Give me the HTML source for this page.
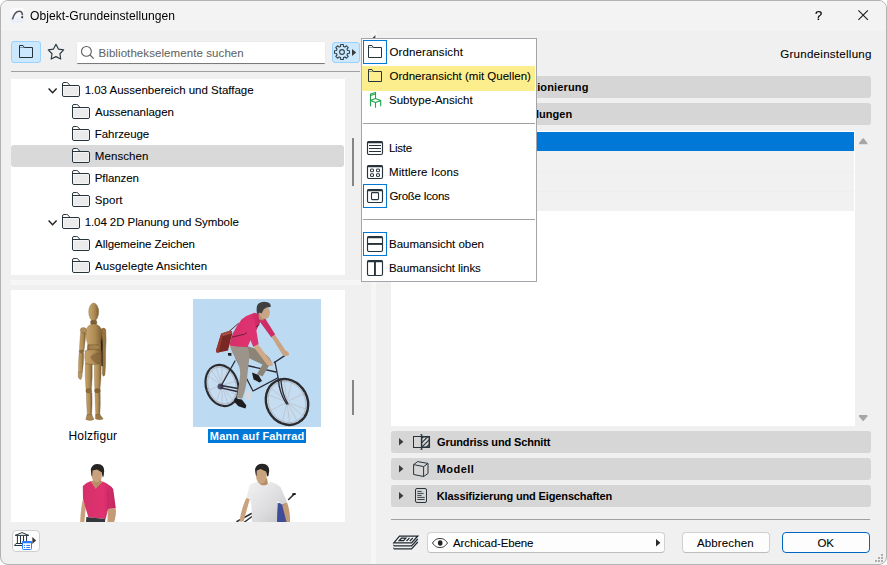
<!DOCTYPE html>
<html lang="de">
<head>
<meta charset="utf-8">
<title>Objekt-Grundeinstellungen</title>
<style>
*{box-sizing:border-box;margin:0;padding:0}
html,body{width:887px;height:565px;overflow:hidden;background:#fff}
body{font-family:"Liberation Sans",sans-serif;font-size:12px;color:#000;position:relative}
#win *{position:absolute}
#win{position:absolute;left:0;top:0;width:887px;height:565px;background:#f0f0f0;border:1px solid #b2b2b2;border-radius:8px;overflow:hidden}
#win>*{margin:-1px 0 0 -1px}
.t{white-space:nowrap;line-height:16px;height:16px;font-size:11.5px;-webkit-text-stroke:0.07px currentColor}
#titlebar{left:1px;top:1px;width:885px;height:30px;background:#f3f3f3}
.hdr{left:391px;width:480px;height:22px;background:#d6d6d6;border-radius:3px}
svg{overflow:visible}
</style>
</head>
<body>
<div id="win">
<div id="titlebar"></div>
<svg style="left:10px;top:7.5px" width="14" height="14.5" viewBox="0 0 14 14.5"><defs><linearGradient id="tig" x1="0" x2="0" y1="0" y2="1"><stop offset="0" stop-color="#fdfdfe"/><stop offset="1" stop-color="#e9edf7"/></linearGradient></defs><rect x="0" y="0" width="14" height="14.5" rx="2.5" fill="url(#tig)"/><path d="M2.4 11.4 C3.8 6.4 6.4 3.3 9.2 3.3 C11.4 3.3 12.4 5 12.4 7.3" fill="none" stroke="#55555f" stroke-width="1.6"/><rect x="11.3" y="8.3" width="1.8" height="1.9" fill="#2a2a30"/></svg>
<div class="t" id="title" style="left:30.27px;top:7.91px;font-size:12.1px;letter-spacing:0.050px;-webkit-text-stroke:0px currentColor;will-change:transform;">Objekt-Grundeinstellungen</div>
<div class="t" id="help" style="left:815.20px;top:7.50px;font-size:13px;-webkit-text-stroke:0.2px currentColor;will-change:transform;">?</div>
<svg style="left:858px;top:10px" width="10.3" height="10.3" viewBox="0 0 10.3 10.3"><path d="M0.4 0.4 L9.9 9.9 M9.9 0.4 L0.4 9.9" stroke="#1a1a1a" stroke-width="1.05" fill="none"/></svg>
<div style="left:11px;top:41px;width:30px;height:22px;background:#cce8ff;border:1px solid #99d1ff;border-radius:3px"></div>
<svg style="left:19px;top:45px" width="14" height="13" viewBox="0 0 14 13"><path d="M0.5 12.5 V0.5 H4 L5.3 2.5 H13.5 V12.5 Z" fill="none" stroke="#26323a" stroke-width="1"/><path d="M0.5 2.5 H5" stroke="#26323a" stroke-width="0.8" fill="none" opacity="0.55"/></svg>
<svg style="left:40px;top:40px" width="30" height="25" viewBox="0 0 30 25"><path d="M15.95 4.35 L18.39 9.09 L23.65 9.95 L19.90 13.73 L20.71 19.00 L15.95 16.60 L11.19 19.00 L12.00 13.73 L8.25 9.95 L13.51 9.09 Z" fill="none" stroke="#2f3c44" stroke-width="1.2" stroke-linejoin="round"/></svg>
<div style="left:77px;top:42px;width:248px;height:22px;background:#fff;border-bottom:1px solid #7a7a7a;border-radius:1px;box-shadow:0 0 0 0.5px #e6e6e6"></div>
<svg style="left:80px;top:45px" width="15" height="15" viewBox="0 0 15 15"><circle cx="6.4" cy="6.4" r="4.9" fill="none" stroke="#5c5c5c" stroke-width="1.1"/><path d="M10 10 L13.7 13.6" stroke="#5c5c5c" stroke-width="1.2"/></svg>
<div class="t" id="search" style="left:98.50px;top:45.02px;font-size:11.5px;letter-spacing:0.081px;color:#646464;">Bibliothekselemente suchen</div>
<div style="left:332px;top:42px;width:28px;height:21px;background:#cce8ff;border:1px solid #99d1ff;border-radius:3px"></div>
<svg style="left:334px;top:44px" width="16" height="16" viewBox="0 0 16 16"><path d="M6.54 2.49 L6.69 0.51 L9.31 0.51 L9.46 2.49 L10.86 3.07 L12.37 1.78 L14.22 3.63 L12.93 5.14 L13.51 6.54 L15.49 6.69 L15.49 9.31 L13.51 9.46 L12.93 10.86 L14.22 12.37 L12.37 14.22 L10.86 12.93 L9.46 13.51 L9.31 15.49 L6.69 15.49 L6.54 13.51 L5.14 12.93 L3.63 14.22 L1.78 12.37 L3.07 10.86 L2.49 9.46 L0.51 9.31 L0.51 6.69 L2.49 6.54 L3.07 5.14 L1.78 3.63 L3.63 1.78 L5.14 3.07 Z" fill="none" stroke="#33414a" stroke-width="1.1" stroke-linejoin="round"/><circle cx="8" cy="8" r="2.4" fill="none" stroke="#33414a" stroke-width="1.1"/></svg>
<svg style="left:352px;top:49px" width="4.2" height="7" viewBox="0 0 4.2 7"><path d="M0 0 L4.2 3.5 L0 7 Z" fill="#3a3a3a"/></svg>
<div style="left:11px;top:71px;width:349px;height:1px;background:#a0a0a0"></div>
<div style="left:11px;top:79px;width:334px;height:196px;background:#fff"></div>
<div style="left:11px;top:145px;width:333px;height:22px;background:#d9d9d9;border-radius:3px"></div>
<svg style="left:48px;top:88px" width="10" height="6" viewBox="0 0 10 6"><path d="M0.6 0.6 L4.6 4.8 L8.6 0.6" fill="none" stroke="#1f1f1f" stroke-width="1.4"/></svg>
<svg style="left:62px;top:82px" width="18" height="15" viewBox="0 0 18 15"><path d="M0.5 13 V2 Q0.5 0.5 2 0.5 H4.6 Q5.4 0.5 6 1.1 L8 3.5 H16 Q17.5 3.5 17.5 5 V13 Q17.5 14.5 16 14.5 H2 Q0.5 14.5 0.5 13 Z" fill="#fff" stroke="#27343b" stroke-width="1"/><path d="M0.5 3.5 H8" fill="none" stroke="#27343b" stroke-width="1"/><rect x="1.5" y="4.6" width="15" height="8.9" fill="#ebebeb"/></svg>
<div class="t" id="tr0" style="left:84.63px;top:82.02px;font-size:11.5px;letter-spacing:-0.007px;">1.03 Aussenbereich und Staffage</div>
<svg style="left:72px;top:104px" width="18" height="15" viewBox="0 0 18 15"><path d="M0.5 13 V2 Q0.5 0.5 2 0.5 H4.6 Q5.4 0.5 6 1.1 L8 3.5 H16 Q17.5 3.5 17.5 5 V13 Q17.5 14.5 16 14.5 H2 Q0.5 14.5 0.5 13 Z" fill="#fff" stroke="#27343b" stroke-width="1"/><path d="M0.5 3.5 H8" fill="none" stroke="#27343b" stroke-width="1"/><rect x="1.5" y="4.6" width="15" height="8.9" fill="#ebebeb"/></svg>
<div class="t" id="tr1" style="left:95.07px;top:104.02px;font-size:11.5px;letter-spacing:-0.036px;">Aussenanlagen</div>
<svg style="left:72px;top:126px" width="18" height="15" viewBox="0 0 18 15"><path d="M0.5 13 V2 Q0.5 0.5 2 0.5 H4.6 Q5.4 0.5 6 1.1 L8 3.5 H16 Q17.5 3.5 17.5 5 V13 Q17.5 14.5 16 14.5 H2 Q0.5 14.5 0.5 13 Z" fill="#fff" stroke="#27343b" stroke-width="1"/><path d="M0.5 3.5 H8" fill="none" stroke="#27343b" stroke-width="1"/><rect x="1.5" y="4.6" width="15" height="8.9" fill="#ebebeb"/></svg>
<div class="t" id="tr2" style="left:94.80px;top:126.02px;font-size:11.5px;letter-spacing:-0.071px;">Fahrzeuge</div>
<svg style="left:72px;top:148px" width="18" height="15" viewBox="0 0 18 15"><path d="M0.5 13 V2 Q0.5 0.5 2 0.5 H4.6 Q5.4 0.5 6 1.1 L8 3.5 H16 Q17.5 3.5 17.5 5 V13 Q17.5 14.5 16 14.5 H2 Q0.5 14.5 0.5 13 Z" fill="#fff" stroke="#27343b" stroke-width="1"/><path d="M0.5 3.5 H8" fill="none" stroke="#27343b" stroke-width="1"/><rect x="1.5" y="4.6" width="15" height="8.9" fill="#e6e6e6"/></svg>
<div class="t" id="tr3" style="left:94.78px;top:148.02px;font-size:11.5px;letter-spacing:0.090px;">Menschen</div>
<svg style="left:72px;top:170px" width="18" height="15" viewBox="0 0 18 15"><path d="M0.5 13 V2 Q0.5 0.5 2 0.5 H4.6 Q5.4 0.5 6 1.1 L8 3.5 H16 Q17.5 3.5 17.5 5 V13 Q17.5 14.5 16 14.5 H2 Q0.5 14.5 0.5 13 Z" fill="#fff" stroke="#27343b" stroke-width="1"/><path d="M0.5 3.5 H8" fill="none" stroke="#27343b" stroke-width="1"/><rect x="1.5" y="4.6" width="15" height="8.9" fill="#ebebeb"/></svg>
<div class="t" id="tr4" style="left:94.80px;top:170.02px;font-size:11.5px;letter-spacing:-0.097px;">Pflanzen</div>
<svg style="left:72px;top:192px" width="18" height="15" viewBox="0 0 18 15"><path d="M0.5 13 V2 Q0.5 0.5 2 0.5 H4.6 Q5.4 0.5 6 1.1 L8 3.5 H16 Q17.5 3.5 17.5 5 V13 Q17.5 14.5 16 14.5 H2 Q0.5 14.5 0.5 13 Z" fill="#fff" stroke="#27343b" stroke-width="1"/><path d="M0.5 3.5 H8" fill="none" stroke="#27343b" stroke-width="1"/><rect x="1.5" y="4.6" width="15" height="8.9" fill="#ebebeb"/></svg>
<div class="t" id="tr5" style="left:94.82px;top:192.02px;font-size:11.5px;letter-spacing:0.056px;">Sport</div>
<svg style="left:48px;top:220px" width="10" height="6" viewBox="0 0 10 6"><path d="M0.6 0.6 L4.6 4.8 L8.6 0.6" fill="none" stroke="#1f1f1f" stroke-width="1.4"/></svg>
<svg style="left:62px;top:214px" width="18" height="15" viewBox="0 0 18 15"><path d="M0.5 13 V2 Q0.5 0.5 2 0.5 H4.6 Q5.4 0.5 6 1.1 L8 3.5 H16 Q17.5 3.5 17.5 5 V13 Q17.5 14.5 16 14.5 H2 Q0.5 14.5 0.5 13 Z" fill="#fff" stroke="#27343b" stroke-width="1"/><path d="M0.5 3.5 H8" fill="none" stroke="#27343b" stroke-width="1"/><rect x="1.5" y="4.6" width="15" height="8.9" fill="#ebebeb"/></svg>
<div class="t" id="tr6" style="left:84.63px;top:214.02px;font-size:11.5px;letter-spacing:-0.071px;">1.04 2D Planung und Symbole</div>
<svg style="left:72px;top:236px" width="18" height="15" viewBox="0 0 18 15"><path d="M0.5 13 V2 Q0.5 0.5 2 0.5 H4.6 Q5.4 0.5 6 1.1 L8 3.5 H16 Q17.5 3.5 17.5 5 V13 Q17.5 14.5 16 14.5 H2 Q0.5 14.5 0.5 13 Z" fill="#fff" stroke="#27343b" stroke-width="1"/><path d="M0.5 3.5 H8" fill="none" stroke="#27343b" stroke-width="1"/><rect x="1.5" y="4.6" width="15" height="8.9" fill="#ebebeb"/></svg>
<div class="t" id="tr7" style="left:95.07px;top:236.02px;font-size:11.5px;letter-spacing:-0.066px;">Allgemeine Zeichen</div>
<svg style="left:72px;top:258px" width="18" height="15" viewBox="0 0 18 15"><path d="M0.5 13 V2 Q0.5 0.5 2 0.5 H4.6 Q5.4 0.5 6 1.1 L8 3.5 H16 Q17.5 3.5 17.5 5 V13 Q17.5 14.5 16 14.5 H2 Q0.5 14.5 0.5 13 Z" fill="#fff" stroke="#27343b" stroke-width="1"/><path d="M0.5 3.5 H8" fill="none" stroke="#27343b" stroke-width="1"/><rect x="1.5" y="4.6" width="15" height="8.9" fill="#ebebeb"/></svg>
<div class="t" id="tr8" style="left:95.07px;top:258.02px;font-size:11.5px;letter-spacing:0.081px;">Ausgelegte Ansichten</div>
<div style="left:352px;top:138px;width:2px;height:48px;background:#858585"></div>
<div style="left:11px;top:280px;width:350px;height:5px;background:#f6f6f6"></div>
<div style="left:11px;top:290px;width:334px;height:232px;background:#fff"></div>
<div style="left:193px;top:299px;width:128px;height:128px;background:#bcdaf2"></div>
<svg style="left:11px;top:290px;overflow:hidden" width="334" height="232" viewBox="11 290 334 232">
<defs>
<linearGradient id="wd" x1="0" x2="1" y1="0" y2="0"><stop offset="0" stop-color="#c8a56c"/><stop offset="0.55" stop-color="#b08c55"/><stop offset="1" stop-color="#7d5f33"/></linearGradient>
<linearGradient id="pk" x1="0" x2="1" y1="0" y2="0"><stop offset="0" stop-color="#d4306a"/><stop offset="0.6" stop-color="#e0326f"/><stop offset="1" stop-color="#c02660"/></linearGradient>
<linearGradient id="wh" x1="0" x2="1" y1="0" y2="1"><stop offset="0" stop-color="#f2f2f3"/><stop offset="0.6" stop-color="#dcdcde"/><stop offset="1" stop-color="#c4c4c8"/></linearGradient>
<radialGradient id="wl"><stop offset="0.75" stop-color="#d3dfea" stop-opacity="0.9"/><stop offset="1" stop-color="#b4c0cc"/></radialGradient>
</defs>
<!-- Holzfigur -->
<g id="holz" stroke="#5e4420" stroke-width="0.5" stroke-opacity="0.55">
<path d="M101.2 329 Q104 327 105.8 329.5 Q106.6 340 105.6 352 Q106 364 105 374.5 Q103.6 378 102.4 374.5 Q102.6 362 101.6 352 Q102.4 340 101.2 329 Z" fill="#96743f"/>
<path d="M100.6 331 Q103.4 340 102.6 352 L102.8 366 L101.4 366 Q100.4 350 100 333 Z" fill="#2f2010"/>
<ellipse cx="93.7" cy="312" rx="5" ry="9" fill="url(#wd)"/>
<rect x="90.6" y="320.3" width="6.2" height="4.4" rx="1.4" fill="#7f6034"/>
<path d="M85.8 333 Q86 324.5 93.8 324 Q101.6 324.5 102 333 Q102 340 99.6 344.6 Q93.8 346.5 88 344.6 Q85.8 340 85.8 333 Z" fill="url(#wd)"/>
<ellipse cx="83.4" cy="330.3" rx="3.1" ry="2.8" fill="#b38f57"/>
<path d="M80.6 332.4 Q79.8 342 79.4 350.6 Q81.4 352 84 350.8 Q85.4 341 85.6 333 Z" fill="url(#wd)"/>
<ellipse cx="81.5" cy="351.6" rx="2.4" ry="1.6" fill="#8a6a38"/>
<path d="M79.2 352.6 Q78.2 363 78.5 372.4 L82.4 372.6 Q83.8 363 83.6 353 Z" fill="url(#wd)"/>
<path d="M78.3 372 L82.2 372.2 Q82.6 376.5 81 379.4 Q79 379.6 78.2 377 Z" fill="#b8945c"/>
<path d="M87.6 344.4 Q94 346.6 100.6 344.4 L101 350.4 Q94 352.2 87.2 350.4 Z" fill="#8d6c3a"/>
<ellipse cx="94" cy="347.2" rx="6" ry="2.6" fill="#a5824b"/>
<path d="M85.2 350.6 Q93 348.4 101.2 350.6 Q102.4 358 100.6 363.8 Q93 365.6 85.6 363.8 Q84 357 85.2 350.6 Z" fill="url(#wd)"/>
<path d="M90.5 357 Q96 351.5 101 353.4 Q101.8 359 100.4 363.6 Q95 364.4 90.5 357 Z" fill="#86653a" opacity="0.75"/>
<path d="M85.3 363.6 Q85 378 86 389.6 L91.4 389.6 Q92.6 378 92.2 364.6 Z" fill="url(#wd)"/>
<path d="M94.4 364.6 Q94.2 378 94.8 389.6 L100 389.6 Q101.4 378 101.2 363.8 Z" fill="url(#wd)"/>
<ellipse cx="88.8" cy="391" rx="3" ry="2.4" fill="#8f6d3b"/>
<ellipse cx="97.5" cy="391" rx="3" ry="2.4" fill="#83622f"/>
<path d="M86.4 392.8 Q86.4 405 87.4 415 L91.6 415 Q92.4 405 92 392.8 Z" fill="url(#wd)"/>
<path d="M95 392.8 Q95.2 405 95.8 415 L99.8 415 Q100.6 405 100.2 392.8 Z" fill="url(#wd)"/>
<path d="M87 414.6 L91.8 414.6 L94 419.6 Q90 421.4 85.8 419.4 Z" fill="#aa8650"/>
<path d="M95.6 414.6 L100 414.6 L103.2 419 Q99 420.6 95.4 418.8 Z" fill="#9c7944"/>
</g>
<!-- Mann auf Fahrrad -->
<g id="bike">
<g transform="rotate(-18 222 385.5)"><ellipse cx="222" cy="385.5" rx="16" ry="21" fill="#c6dcf0" stroke="#2b2b2e" stroke-width="2.2"/><ellipse cx="222" cy="385.5" rx="13.8" ry="18.8" fill="none" stroke="#a9b3be" stroke-width="0.8"/><path d="M222 365 V406 M206 385.5 H238 M211 371 L233 400 M233 371 L211 400 M216 366.5 L228 404.5 M228 366.5 L216 404.5" stroke="#b3b3b8" stroke-width="0.45"/></g>
<g transform="rotate(-28 287 402)"><ellipse cx="287" cy="402" rx="20.5" ry="23.5" fill="#c6dcf0" stroke="#2b2b2e" stroke-width="2.4"/><ellipse cx="287" cy="402" rx="18.2" ry="21.2" fill="none" stroke="#a9b3be" stroke-width="0.8"/><path d="M287 379 V425 M267 402 H307 M273 386 L301 418 M301 386 L273 418 M279 381 L295 423 M295 381 L279 423" stroke="#b3b3b8" stroke-width="0.45"/></g>
<circle cx="220.5" cy="386.5" r="3" fill="#4e4f6a"/>
<g fill="none" stroke="#2c2a36" stroke-width="1.3" stroke-linecap="round">
<path d="M221 386 L235 361 M221 385.5 L238 388.5 M221 387.8 L237 391.5 M236 358 L253 391 M247 365.5 L276 372 M253 391 L277.5 378"/>
<path d="M275 362 L278.5 380 Q279 392 286.5 404 M281 381 Q282 394 288 404" stroke-width="1.3"/>
<path d="M274.4 362.5 L285.4 355.2" stroke-width="1.5"/>
</g>
<path d="M228 353 L231.4 353 L231.4 356 L228 355.6 Z M243 353.6 L245.4 353.6 L245.4 356.4 L243 356 Z" fill="#1d1d22"/>
<!-- far leg -->
<path d="M247 346 L258 349.5 Q269 355 271.5 361.5 L262.5 376.5 L257 374 L262.5 364.5 L246.5 357 Z" fill="#8d8478"/>
<path d="M252 372.5 L258.5 375 L262 381 L259.4 382.6 L253.6 379.4 Z" fill="#1d1d20"/>
<!-- bag -->
<path d="M221.2 333.4 L230.6 330.6 Q232.6 331.4 232.2 334 L228 350.4 L217.2 352.8 Q215.8 352 216.3 349.6 Z" fill="#7a2823"/>
<path d="M221.2 333.4 L230.6 330.6 Q232.4 331.2 232.2 333.6 L222.4 336.2 Z" fill="#a24b40"/>
<path d="M221.2 333.4 L222.6 336 L218.6 352.4 L217.2 352.8 Q215.8 352 216.3 349.6 Z" fill="#94382f"/>
<path d="M229.6 331 L238.6 323.2" stroke="#4a2320" stroke-width="0.9" fill="none"/>
<!-- torso -->
<path d="M254.6 312.8 Q247 315 241.5 319.5 Q236.5 326 233 333 Q230.2 339 229.6 345.6 Q238 348.5 247.4 347.4 L251 339 L257 329 L261.2 320 L259.2 314 Z" fill="url(#pk)"/>
<path d="M231.6 337.2 L244.6 334.2 L259.4 324.6" stroke="#5a2230" stroke-width="0.9" fill="none"/>
<!-- far arm -->
<path d="M259.6 316.5 L264.6 317.6 L275.2 334.4 L271.4 337.4 L260.4 322.6 Z" fill="#cf2c66"/>
<path d="M271.6 337 L275 334.8 L285.6 350.6 Q289.6 352.6 289 355 Q286.6 357 283 355.4 Z" fill="#c9a482"/>
<!-- near leg -->
<path d="M230 346 L247.4 347.2 Q249.6 352 249.4 357 L247.6 373 Q246.6 388 242.2 398.6 L236.6 398 Q239.4 384 240.2 374 Q240 366 236.4 360 Q231.6 352 230 346 Z" fill="#9c948a"/>
<path d="M234.6 398.6 L241.8 399.4 L246.4 405.6 L245.4 408.4 L238.4 406.2 L234 401.6 Z" fill="#1d1d20"/>
<ellipse cx="248" cy="395.5" rx="3" ry="4.4" fill="#d5d8dc" opacity="0.9"/>
<!-- near arm -->
<path d="M242.6 321.4 Q247 317.4 254.6 319.4 L258.6 344.2 L253.4 347 L247.6 334 Z" fill="#dd3370"/>
<path d="M253.6 346.6 L258.2 344.6 L270.6 361 Q273.6 363 272.6 365.4 Q270 366.8 267 364.8 Z" fill="#d0aa88"/>
<!-- head -->
<path d="M258.4 313 L259 319.6 L263.4 320.4 L264 315 Z" fill="#b48f70"/>
<ellipse cx="264.8" cy="312.6" rx="5.1" ry="6.4" fill="#c8a584"/>
<path d="M257 313.4 Q255.6 306 258.6 303.4 Q262 301 267.4 302.2 Q271.4 303.4 270.6 307 L266.4 307.4 L263.6 309.4 L261.6 313.6 L259.6 312.4 L258.6 314 Z" fill="#3f3f3f"/>
</g>
<!-- Mann pink -->
<g id="m3">
<path d="M83 498.5 L85.8 507.5 L84.4 522 L80.2 522 Q80.5 510 83 498.5 Z" fill="#c9a27b"/>
<path d="M108 509 L115.6 508.4 Q116.8 512 114.2 522 L107.4 522 Z" fill="#c39b74"/>
<path d="M93.5 478 L93 484 L96 489 L100.5 484.5 L101.5 477 Z" fill="#b58e68"/>
<ellipse cx="96.6" cy="474.3" rx="5.3" ry="8" fill="#c9a27c"/>
<path d="M91.6 476 Q90.6 470 91 468.6 Q92.4 463.8 97.6 463.9 Q104.4 464.2 104.2 471 L103.6 476.4 L102.6 477 L101.6 472.2 L97 469.6 L92.6 470.6 L92.2 475.5 Z" fill="#262523"/>
<path d="M82.8 486 Q86 482.5 91 481 L95.8 488.5 L102.5 481.5 Q110 484.5 113.2 489 L115.8 508.2 L107.8 509 L105.3 519 L88.4 517.3 L85.3 507 L83 498.5 Z" fill="url(#pk)"/>
<path d="M91 481 L95.8 488.6 L97.6 486.6 L93.4 480.4 Z M102.6 481.4 L98 486.6 L96.2 485 L100.2 480.4 Z" fill="#b98f68"/>
<path d="M107.5 490 Q109 500 107.8 509 L105.3 519" fill="none" stroke="#b3245a" stroke-width="0.8" opacity="0.7"/>
<path d="M86.4 517 L105.3 519 L105 522 L86 522 Z" fill="#33363a"/>
</g>
<!-- Mann Rollstuhl -->
<g id="m4">
<path d="M277.5 503 L287 503.5 L287.4 522 L276.5 522 Z" fill="#3f4c98"/>
<path d="M288.6 499.5 L293.6 494.6 M237 521.5 L251.5 513.5 M244.5 522 L252 516.5" stroke="#2e3038" stroke-width="1.5" fill="none" stroke-linecap="round"/>
<path d="M293 494.2 L295 494" stroke="#16171a" stroke-width="1.8" stroke-linecap="round"/>
<path d="M258.5 480 L258 484.5 L263 488 L268 484.5 L267 478 Z" fill="#b58e68"/>
<ellipse cx="261.3" cy="475.4" rx="5.3" ry="8.4" fill="#c9a37e"/>
<path d="M256 476 Q254.8 470 255.2 468.4 Q256.8 463.6 262.4 463.7 Q269.4 464 269.2 471 L268.4 476 L267.2 476.6 L266 471.6 L260.5 469 L256.8 470.4 L256.6 475.4 Z" fill="#262523"/>
<path d="M249.7 485 Q253 482.5 257.7 481.7 Q263 489 270.7 481.7 Q277 483.5 280.7 487.2 L287 502 L282 504.8 L277.5 501 L277 522 L252 522 L251.4 504.6 L249.8 498.6 L246.4 497.8 Z" fill="url(#wh)"/>
<path d="M246.3 498 L249.8 499 L243.5 521.6 L239.4 521.6 Q241.5 508 246.3 498 Z" fill="#c9a37e"/>
<path d="M282.2 505 L287 502.3 Q290.5 512 290 522 L286.5 522 Z" fill="#c39b74"/>
</g>
</svg>
<div class="t" id="lholz" style="left:68.49px;top:427.84px;font-size:12px;letter-spacing:0.159px;-webkit-text-stroke:0px currentColor;">Holzfigur</div>
<div style="left:208px;top:429px;width:98px;height:14px;background:#0078d7"></div>
<div class="t" id="lmann" style="left:209.83px;top:428.19px;font-size:11px;letter-spacing:0.144px;font-weight:bold;color:#fff;-webkit-text-stroke:0px currentColor;">Mann auf Fahrrad</div>
<div style="left:352px;top:380px;width:2px;height:35px;background:#858585"></div>
<div style="left:12px;top:530px;width:28px;height:22px;background:#fdfdfd;border:1px solid #cfcfcf;border-radius:4px"></div>
<svg style="left:14px;top:532px" width="23" height="18" viewBox="0 0 23 18"><g fill="none" stroke="#27343b" stroke-width="1"><path d="M1.2 3.4 L8 0.6 L14.8 3.4 Z" stroke-linejoin="round"/><path d="M3.4 4 V11 M6.5 4 V11 M9.5 4 V11 M12.6 4 V11"/><path d="M8 11.5 H2 L0.5 13.5 H8"/></g><rect x="8.5" y="9.5" width="9" height="8" rx="1" fill="#fff" stroke="#2b7fff" stroke-width="1"/><rect x="8" y="9" width="10" height="2.2" rx="0.8" fill="#2b7fff"/><path d="M10 13.5 H11 M12.3 13.5 H16 M10 15.5 H11 M12.3 15.5 H16" stroke="#2b7fff" stroke-width="1"/><path d="M18.3 5.1 L22.2 8.5 L18.3 11.9 Z" fill="#3a3a3a"/></svg>
<div style="left:371px;top:31px;width:5px;height:534px;background:#f6f6f6"></div>
<div class="t" id="grund" style="left:780.16px;top:45.98px;font-size:11.6px;letter-spacing:0.247px;">Grundeinstellung</div>
<div class="hdr" style="top:76px"></div>
<div class="t" id="h0" style="left:432.00px;top:79.19px;font-size:11px;letter-spacing:0.148px;font-weight:bold;-webkit-text-stroke:0px currentColor;">Vorschau und Positionierung</div>
<div class="hdr" style="top:103px"></div>
<div class="t" id="h1" style="left:460.00px;top:106.19px;font-size:11px;letter-spacing:0.050px;font-weight:bold;-webkit-text-stroke:0px currentColor;">Eigene Einstellungen</div>
<div style="left:391px;top:131px;width:464px;height:295px;background:#fff"></div>
<div style="left:391px;top:151px;width:463px;height:60px;background:#f1f1f1"></div>
<div style="left:391px;top:171px;width:463px;height:1px;background:#eeeeee"></div>
<div style="left:391px;top:191px;width:463px;height:1px;background:#eeeeee"></div>
<div style="left:391px;top:132px;width:463px;height:19px;background:#0078d7"></div>
<svg style="left:858.8px;top:137.7px" width="8.4" height="6.3" viewBox="0 0 8.4 6.3"><path d="M3.6 0.5 Q4.2 0 4.8 0.5 L8.4 5 V6.3 H0 V5 Z" fill="#a6a6a6"/></svg>
<svg style="left:858.8px;top:414.9px" width="8.4" height="6.3" viewBox="0 0 8.4 6.3"><path d="M3.6 5.8 Q4.2 6.3 4.8 5.8 L8.4 1.3 V0 H0 V1.3 Z" fill="#a6a6a6"/></svg>
<div class="hdr" style="top:431px"></div>
<svg style="left:399px;top:437.8px" width="4.4" height="7.4" viewBox="0 0 4.4 7.4"><path d="M0 0 L4.4 3.7 L0 7.4 Z" fill="#3a3a3a"/></svg>
<div class="t" id="h2" style="left:437.12px;top:434.19px;font-size:11px;letter-spacing:-0.139px;font-weight:bold;-webkit-text-stroke:0px currentColor;">Grundriss und Schnitt</div>
<div class="hdr" style="top:458px"></div>
<svg style="left:399px;top:464.8px" width="4.4" height="7.4" viewBox="0 0 4.4 7.4"><path d="M0 0 L4.4 3.7 L0 7.4 Z" fill="#3a3a3a"/></svg>
<div class="t" id="h3" style="left:436.75px;top:461.19px;font-size:11px;letter-spacing:0.450px;font-weight:bold;-webkit-text-stroke:0px currentColor;">Modell</div>
<div class="hdr" style="top:485px"></div>
<svg style="left:399px;top:491.8px" width="4.4" height="7.4" viewBox="0 0 4.4 7.4"><path d="M0 0 L4.4 3.7 L0 7.4 Z" fill="#3a3a3a"/></svg>
<div class="t" id="h4" style="left:436.75px;top:488.19px;font-size:11px;letter-spacing:-0.133px;font-weight:bold;-webkit-text-stroke:0px currentColor;">Klassifizierung und Eigenschaften</div>
<svg style="left:413px;top:434px" width="18" height="16" viewBox="0 0 18 16"><defs><clipPath id="hc"><rect x="9" y="2.6" width="7.4" height="10.8"/></clipPath></defs><rect x="0.5" y="2.5" width="16" height="11" fill="none" stroke="#27343b" stroke-width="1"/><g clip-path="url(#hc)" stroke="#27343b" stroke-width="1.2"><path d="M5 8 L13 0 M6.5 11 L16.5 1 M8 14 L18 4 M11 15.5 L19 7.5"/></g><path d="M8.6 0.3 V15.7 M16.3 2.5 V13.5 M8.6 2.7 H17 M8.6 13.3 H17" stroke="#27343b" stroke-width="1.5" fill="none"/><path d="M7.6 0.6 L9.5 2.5 M7.6 15.4 L9.5 13.5" stroke="#27343b" stroke-width="1" fill="none"/></svg>
<svg style="left:413px;top:461px" width="16" height="16" viewBox="0 0 16 16"><path d="M0.6 3.6 L4.6 0.6 L15 2.4 L10.6 5.6 Z M0.6 3.6 V13.5 L10.6 15.5 V5.6 M10.6 15.5 L15 12.5 V2.4" fill="none" stroke="#27343b" stroke-width="1" stroke-linejoin="round"/></svg>
<svg style="left:415px;top:488px" width="12" height="15" viewBox="0 0 12 15"><rect x="0.5" y="0.5" width="11" height="14" rx="1.5" fill="none" stroke="#27343b" stroke-width="1"/><path d="M2.3 3.4 H6.6 M2.3 5.4 H8.6 M2.3 7.4 H6.6 M2.3 9.4 H9.7 M2.3 11.5 H9.7" stroke="#27343b" stroke-width="0.9"/></svg>
<div style="left:391px;top:519px;width:479px;height:1px;background:#a0a0a0"></div>
<svg style="left:393px;top:534.7px" width="26" height="16" viewBox="0 0 26 16"><g fill="none" stroke="#1f2b32" stroke-width="1.25" stroke-linejoin="miter"><path d="M0.8 13.8 H18.5 L24.8 7"/><path d="M0.8 10.8 H18.5 L24.8 4"/><path d="M6.5 1 H24.8 L18.5 7.8 H0.8 Z" fill="#f0f0f0"/><path d="M8.5 3.2 H12.8 L10.6 5.6 H6.2 Z"/><path d="M16.5 3 L13.5 6 M19.8 3 L16.8 6" stroke-width="1.1"/></g><path d="M0.3 9.2 L2 10.8 H0.3 Z M0.3 12.2 L2 13.8 H0.3 Z" fill="#27343b"/></svg>
<div style="left:427px;top:532px;width:238px;height:21px;background:#fdfdfd;border:1px solid #d0d0d0;border-bottom-color:#bcbcbc;border-radius:4px"></div>
<svg style="left:432px;top:538px" width="16" height="10" viewBox="0 0 16 10"><path d="M0.5 5 C3 1.2 5.5 0.5 8 0.5 C10.5 0.5 13 1.2 15.5 5 C13 8.8 10.5 9.5 8 9.5 C5.5 9.5 3 8.8 0.5 5 Z" fill="none" stroke="#333" stroke-width="1"/><ellipse cx="8.2" cy="5" rx="2.3" ry="2.7" fill="#222"/></svg>
<div class="t" id="layer" style="left:453.04px;top:535.02px;font-size:11.5px;letter-spacing:-0.105px;">Archicad-Ebene</div>
<svg style="left:656.4px;top:539px" width="4.4" height="7.4" viewBox="0 0 4.4 7.4"><path d="M0 0 L4.4 3.7 L0 7.4 Z" fill="#2a2a2a"/></svg>
<div style="left:682px;top:532px;width:88px;height:21px;background:#fdfdfd;border:1px solid #d0d0d0;border-bottom-color:#bcbcbc;border-radius:4px"></div>
<div class="t" id="cancel" style="left:697.07px;top:535.02px;font-size:11.5px;letter-spacing:0.114px;">Abbrechen</div>
<div style="left:782px;top:532px;width:88px;height:21px;background:#fdfdfd;border:1px solid #0067c0;border-radius:4px"></div>
<div class="t" id="ok" style="left:817.51px;top:535.02px;font-size:11.5px;letter-spacing:-0.300px;">OK</div>
<svg style="left:875px;top:554px" width="8" height="8" viewBox="0 0 8 8"><g fill="#adadad"><rect x="6" y="0" width="2" height="2"/><rect x="3" y="3" width="2" height="2"/><rect x="6" y="3" width="2" height="2"/><rect x="0" y="6" width="2" height="2"/><rect x="3" y="6" width="2" height="2"/><rect x="6" y="6" width="2" height="2"/></g></svg>
<div style="left:371px;top:33px;width:6px;height:6px;background:#f8f8f8"></div>
<svg style="left:371.6px;top:34.6px" width="3.4" height="3.4" viewBox="0 0 3.4 3.4"><path d="M3.4 0 V3.4 H0 Z" fill="#444"/></svg>
<div style="left:361px;top:38px;width:176px;height:244px;background:#fff;border:1px solid #a3a5ab"></div>
<div style="left:361px;top:66px;width:174px;height:25px;background:#fdee8d;border-left:1px solid #c4b86c"></div>
<div style="left:363px;top:40px;width:24px;height:24px;background:#fff;border:1px solid #0078d7"></div>
<div style="left:363px;top:184px;width:24px;height:24px;background:#fff;border:1px solid #0078d7"></div>
<div style="left:363px;top:232px;width:24px;height:24px;background:#fff;border:1px solid #0078d7"></div>
<div style="left:363px;top:123px;width:172px;height:1px;background:#a0a0a0"></div>
<div style="left:363px;top:219px;width:172px;height:1px;background:#a0a0a0"></div>
<div class="t" id="mi0" style="left:389.52px;top:44.02px;font-size:11.5px;letter-spacing:0.095px;">Ordneransicht</div>
<div class="t" id="mi1" style="left:389.52px;top:68.02px;font-size:11.5px;letter-spacing:0.004px;">Ordneransicht (mit Quellen)</div>
<div class="t" id="mi2" style="left:389.00px;top:92.02px;font-size:11.5px;letter-spacing:-0.010px;">Subtype-Ansicht</div>
<div class="t" id="mi3" style="left:389.00px;top:140.02px;font-size:11.5px;letter-spacing:-0.300px;">Liste</div>
<div class="t" id="mi4" style="left:389.00px;top:164.02px;font-size:11.5px;letter-spacing:0.109px;">Mittlere Icons</div>
<div class="t" id="mi5" style="left:389.47px;top:188.02px;font-size:11.5px;letter-spacing:-0.300px;">Große Icons</div>
<div class="t" id="mi6" style="left:389.00px;top:236.02px;font-size:11.5px;letter-spacing:-0.019px;">Baumansicht oben</div>
<div class="t" id="mi7" style="left:389.00px;top:260.02px;font-size:11.5px;letter-spacing:-0.053px;">Baumansicht links</div>
<svg style="left:368px;top:45px" width="14" height="13" viewBox="0 0 14 13"><path d="M0.5 12.5 V0.5 H4 L5.3 2.5 H13.5 V12.5 Z" fill="#fff" stroke="#27343b" stroke-width="1"/><path d="M0.5 2.5 H5" stroke="#27343b" stroke-width="0.8" fill="none" opacity="0.55"/></svg>
<svg style="left:368px;top:69px" width="14" height="13" viewBox="0 0 14 13"><path d="M0.5 12.5 V0.5 H4 L5.3 2.5 H13.5 V12.5 Z" fill="#fdee8d" stroke="#27343b" stroke-width="1"/><path d="M0.5 2.5 H5" stroke="#27343b" stroke-width="0.8" fill="none" opacity="0.55"/></svg>
<svg style="left:369px;top:91px" width="13" height="18" viewBox="0 0 13 18"><path d="M1.5 15.2 V3 L6.5 1.4 V7.6 M1.5 4.6 L6.5 3 M1.5 9.4 L6.5 7.6 L11.7 9.4 L6.5 11.5 Z M6.5 11.5 V16.8 M11.7 9.4 V15.2" fill="none" stroke="#1ea54c" stroke-width="1.1" stroke-linejoin="round"/></svg>
<svg style="left:367px;top:141px" width="16" height="14" viewBox="0 0 16 14"><rect x="0.5" y="0.5" width="15" height="13" rx="1.5" fill="#fff" stroke="#27343b" stroke-width="1.15"/><rect x="0.4" y="0.2" width="15.2" height="2" rx="0.8" fill="#27343b"/><path d="M2 4.5 H14 M2 7.5 H14 M2 10.5 H14" stroke="#27343b" stroke-width="1"/></svg>
<svg style="left:367px;top:165px" width="16" height="14" viewBox="0 0 16 14"><rect x="0.5" y="0.5" width="15" height="13" rx="1.5" fill="#fff" stroke="#27343b" stroke-width="1.15"/><rect x="0.4" y="0.2" width="15.2" height="2" rx="0.8" fill="#27343b"/><rect x="3.5" y="4.1" width="3" height="2.6" rx="0.3" fill="none" stroke="#27343b" stroke-width="1"/><rect x="3.5" y="8.8" width="3" height="2.6" rx="0.3" fill="none" stroke="#27343b" stroke-width="1"/><rect x="9.5" y="4.1" width="3" height="2.6" rx="0.3" fill="none" stroke="#27343b" stroke-width="1"/><rect x="9.5" y="8.8" width="3" height="2.6" rx="0.3" fill="none" stroke="#27343b" stroke-width="1"/></svg>
<svg style="left:367px;top:189px" width="16" height="14" viewBox="0 0 16 14"><rect x="0.5" y="0.5" width="15" height="13" rx="1.5" fill="#fff" stroke="#27343b" stroke-width="1.15"/><rect x="0.4" y="0.2" width="15.2" height="2" rx="0.8" fill="#27343b"/><rect x="4.5" y="3.6" width="7" height="7" rx="0.8" fill="none" stroke="#27343b" stroke-width="1.1"/></svg>
<svg style="left:367px;top:236px" width="16" height="16" viewBox="0 0 16 16"><rect x="0.5" y="0.5" width="15" height="15" rx="1.5" fill="#fff" stroke="#27343b" stroke-width="1.15"/><rect x="0.4" y="0.2" width="15.2" height="2" rx="0.8" fill="#27343b"/><rect x="0.5" y="7" width="15" height="1.9" fill="#27343b"/></svg>
<svg style="left:367px;top:260px" width="16" height="16" viewBox="0 0 16 16"><rect x="0.5" y="0.5" width="15" height="15" rx="1.5" fill="#fff" stroke="#27343b" stroke-width="1.15"/><rect x="0.4" y="0.2" width="15.2" height="2" rx="0.8" fill="#27343b"/><rect x="7" y="0.5" width="1.9" height="15" fill="#27343b"/></svg>
</div>
</body>
</html>
